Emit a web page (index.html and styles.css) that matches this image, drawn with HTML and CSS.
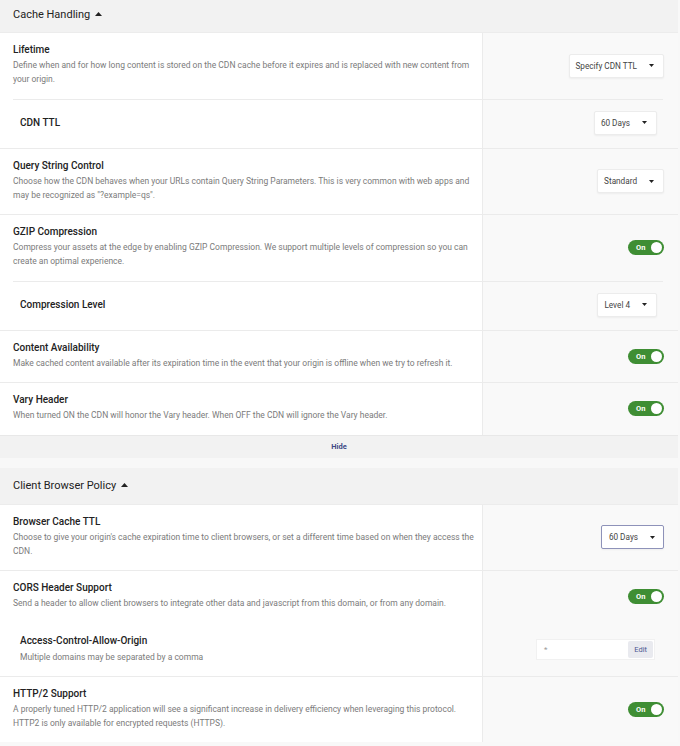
FILE: index.html
```html
<!DOCTYPE html>
<html>
<head>
<meta charset="utf-8">
<link rel="stylesheet" href="styles.css">
</head>
<body>
<div class="page">
  <section class="sec first">
    <div class="sec-head">Cache Handling <svg class="up" width="7" height="4" viewBox="0 0 7 4"><polygon points="0,4 7,4 3.5,0"/></svg></div>
    <div class="card">
      <div class="row">
        <div class="main">
          <div class="title">Lifetime</div>
          <div class="desc">Define when and for how long content is stored on the CDN cache before it expires and is replaced with new content from your origin.</div>
        </div>
        <div class="ctrl"><div class="select">Specify CDN TTL <svg class="caret" width="5" height="3" viewBox="0 0 5 3"><polygon points="0,0 5,0 2.5,3"/></svg></div></div>
      </div>
      <div class="row sub">
        <div class="main"><div class="title">CDN TTL</div></div>
        <div class="ctrl"><div class="select">60 Days <svg class="caret" width="5" height="3" viewBox="0 0 5 3"><polygon points="0,0 5,0 2.5,3"/></svg></div></div>
      </div>
      <div class="row">
        <div class="main">
          <div class="title">Query String Control</div>
          <div class="desc">Choose how the CDN behaves when your URLs contain Query String Parameters. This is very common with web apps and may be recognized as "?example=qs".</div>
        </div>
        <div class="ctrl"><div class="select">Standard <svg class="caret" width="5" height="3" viewBox="0 0 5 3"><polygon points="0,0 5,0 2.5,3"/></svg></div></div>
      </div>
      <div class="row">
        <div class="main">
          <div class="title">GZIP Compression</div>
          <div class="desc">Compress your assets at the edge by enabling GZIP Compression. We support multiple levels of compression so you can create an optimal experience.</div>
        </div>
        <div class="ctrl"><div class="toggle"><span>On</span><i class="knob"></i></div></div>
      </div>
      <div class="row sub">
        <div class="main"><div class="title">Compression Level</div></div>
        <div class="ctrl"><div class="select">Level 4 <svg class="caret" width="5" height="3" viewBox="0 0 5 3"><polygon points="0,0 5,0 2.5,3"/></svg></div></div>
      </div>
      <div class="row">
        <div class="main">
          <div class="title">Content Availability</div>
          <div class="desc">Make cached content available after its expiration time in the event that your origin is offline when we try to refresh it.</div>
        </div>
        <div class="ctrl"><div class="toggle"><span>On</span><i class="knob"></i></div></div>
      </div>
      <div class="row">
        <div class="main">
          <div class="title">Vary Header</div>
          <div class="desc">When turned ON the CDN will honor the Vary header. When OFF the CDN will ignore the Vary header.</div>
        </div>
        <div class="ctrl"><div class="toggle"><span>On</span><i class="knob"></i></div></div>
      </div>
    </div>
    <div class="hide">Hide</div>
  </section>

  <section class="sec">
    <div class="sec-head">Client Browser Policy <svg class="up" width="7" height="4" viewBox="0 0 7 4"><polygon points="0,4 7,4 3.5,0"/></svg></div>
    <div class="card">
      <div class="row">
        <div class="main">
          <div class="title">Browser Cache TTL</div>
          <div class="desc">Choose to give your origin's cache expiration time to client browsers, or set a different time based on when they access the CDN.</div>
        </div>
        <div class="ctrl"><div class="select focus">60 Days <svg class="caret" width="5" height="3" viewBox="0 0 5 3"><polygon points="0,0 5,0 2.5,3"/></svg></div></div>
      </div>
      <div class="row">
        <div class="main">
          <div class="title">CORS Header Support</div>
          <div class="desc">Send a header to allow client browsers to integrate other data and javascript from this domain, or from any domain.</div>
        </div>
        <div class="ctrl"><div class="toggle"><span>On</span><i class="knob"></i></div></div>
      </div>
      <div class="row sub cont">
        <div class="main">
          <div class="title">Access-Control-Allow-Origin</div>
          <div class="desc">Multiple domains may be separated by a comma</div>
        </div>
        <div class="ctrl"><div class="field"><span class="val">*</span><span class="edit">Edit</span></div></div>
      </div>
      <div class="row">
        <div class="main">
          <div class="title">HTTP/2 Support</div>
          <div class="desc">A properly tuned HTTP/2 application will see a significant increase in delivery efficiency when leveraging this protocol. HTTP2 is only available for encrypted requests (HTTPS).</div>
        </div>
        <div class="ctrl"><div class="toggle"><span>On</span><i class="knob"></i></div></div>
      </div>
    </div>
  </section>
</div>
</body>
</html>
```

FILE: styles.css
```css
html, body {
  margin: 0;
  padding: 0;
  background: #f8f8f8;
  font-family: Roboto, "Noto Sans", "Liberation Sans", sans-serif;
  color: #222;
}

.page {
  width: 678px;
  margin-top: -4px;
}

.sec + .sec {
  margin-top: 10px;
}

.sec-head {
  height: 36px;
  display: flex;
  align-items: center;
  gap: 5px;
  padding: 0 13px;
  background: #f2f2f2;
  font-size: 11px;
  color: #222;
}

.sec-head .up {
  fill: #222;
  margin-top: -1px;
}

.card {
  background: #fff;
  border-top: 1px solid #ececec;
}

.row {
  display: grid;
  grid-template-columns: 482px 1fr;
}

.row + .row {
  border-top: 1px solid #ebebeb;
}

.row.sub {
  border-top: 0;
}

.main {
  padding: 9px 8px 12.5px 13px;
  background: #fff;
}

.ctrl {
  background: #f9f9f9;
  border-left: 1px solid #ebebeb;
  display: flex;
  align-items: center;
  justify-content: flex-end;
  padding-right: 14px;
}

.row.sub .main {
  padding: 12px 13px 12px 20px;
  display: flex;
  flex-direction: column;
  justify-content: center;
  background-image: linear-gradient(#ebebeb, #ebebeb);
  background-size: calc(100% - 13px) 1px;
  background-position: right top;
  background-repeat: no-repeat;
}

.row.sub .ctrl {
  padding: 12px 21px 13px 0;
  background-image: linear-gradient(#ebebeb, #ebebeb);
  background-size: calc(100% - 15px) 1px;
  background-position: left top;
  background-repeat: no-repeat;
}

.row.sub.cont .main,
.row.sub.cont .ctrl {
  background-image: none;
}

.row.sub.cont .main {
  padding-top: 10px;
  padding-bottom: 12px;
}

.row.sub.cont .ctrl {
  padding: 0 23px 0 0;
}

.title {
  font-size: 10px;
  font-weight: 500;
  line-height: 16px;
  color: #222;
}

.desc {
  font-size: 8.5px;
  line-height: 14px;
  color: #7b7b7b;
}

.row.sub.cont .desc {
  margin-top: 1px;
}

.select {
  display: inline-flex;
  align-items: center;
  height: 24px;
  box-sizing: border-box;
  padding: 0 9px 0 6px;
  background: #fff;
  border: 1px solid #ececec;
  border-radius: 2px;
  box-shadow: 0 1px 2px rgba(0, 0, 0, 0.05);
  font-size: 8.2px;
  color: #444;
}

.select .caret {
  fill: #222;
  margin-left: 12px;
}

.select.focus {
  border-color: #8e92b9;
  padding-right: 8px;
  padding-left: 7px;
}

.toggle {
  width: 36px;
  height: 15px;
  box-sizing: border-box;
  border-radius: 8px;
  background: #3f8e34;
  display: flex;
  align-items: center;
  justify-content: space-between;
  padding: 0 2px 0 8px;
}

.toggle span {
  color: #fff;
  font-size: 7.5px;
  font-weight: 700;
}

.knob {
  width: 11px;
  height: 11px;
  border-radius: 50%;
  background: #fff;
}

.field {
  display: flex;
  align-items: center;
  width: 119px;
  height: 21px;
  box-sizing: border-box;
  padding: 2px 1px 2px 2px;
  background: #fff;
  border: 1px solid #f1f1f1;
}

.field .val {
  flex: 1;
  padding-left: 5px;
  font-size: 8px;
  color: #999;
}

.field .edit {
  height: 17px;
  display: flex;
  align-items: center;
  padding: 0 6px;
  background: #e9eaef;
  border-radius: 2px;
  font-size: 7.5px;
  color: #4b5691;
}

.hide {
  height: 22px;
  display: flex;
  align-items: center;
  justify-content: center;
  background: #f2f2f2;
  border-top: 1px solid #e8e8e8;
  font-size: 7.5px;
  font-weight: 700;
  color: #3f4a86;
}
```
